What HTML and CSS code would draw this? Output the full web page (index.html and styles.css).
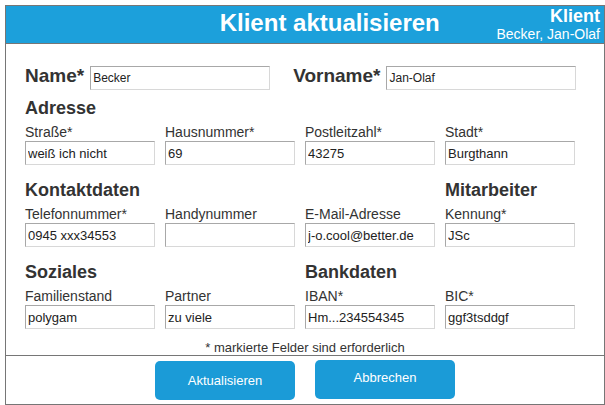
FILE: index.html
```html
<!DOCTYPE html>
<html lang="de">
<head>
<meta charset="utf-8">
<title>Klient aktualisieren</title>
<link rel="stylesheet" href="styles.css">
</head>
<body>
<div class="card">
  <header class="hdr">
    <h1 class="hdr-title">Klient aktualisieren</h1>
    <div class="hdr-client">
      <div class="hdr-client-label">Klient</div>
      <div class="hdr-client-name">Becker, Jan-Olaf</div>
    </div>
  </header>
  <form class="body">
    <div class="name-row">
      <label class="name-field"><span class="big-label">Name*</span><input class="inp inp-sm w-name" value="Becker"></label>
      <label class="name-field"><span class="big-label">Vorname*</span><input class="inp inp-sm w-vorname" value="Jan-Olaf"></label>
    </div>
    <section class="sec sec-first">
      <h2 class="sec-h col-1">Adresse</h2>
      <label class="field"><span class="field-label">Straße*</span><input class="inp inp-grid" value="weiß ich nicht"></label>
      <label class="field"><span class="field-label">Hausnummer*</span><input class="inp inp-grid" value="69"></label>
      <label class="field"><span class="field-label">Postleitzahl*</span><input class="inp inp-grid" value="43275"></label>
      <label class="field"><span class="field-label">Stadt*</span><input class="inp inp-grid" value="Burgthann"></label>
    </section>
    <section class="sec">
      <h2 class="sec-h col-1">Kontaktdaten</h2>
      <h2 class="sec-h col-4">Mitarbeiter</h2>
      <label class="field"><span class="field-label">Telefonnummer*</span><input class="inp inp-grid" value="0945 xxx34553"></label>
      <label class="field"><span class="field-label">Handynummer</span><input class="inp inp-grid" value=""></label>
      <label class="field"><span class="field-label">E-Mail-Adresse</span><input class="inp inp-grid" value="j-o.cool@better.de"></label>
      <label class="field"><span class="field-label">Kennung*</span><input class="inp inp-grid" value="JSc"></label>
    </section>
    <section class="sec">
      <h2 class="sec-h col-1">Soziales</h2>
      <h2 class="sec-h col-3">Bankdaten</h2>
      <label class="field"><span class="field-label">Familienstand</span><input class="inp inp-grid" value="polygam"></label>
      <label class="field"><span class="field-label">Partner</span><input class="inp inp-grid" value="zu viele"></label>
      <label class="field"><span class="field-label">IBAN*</span><input class="inp inp-grid" value="Hm...234554345"></label>
      <label class="field"><span class="field-label">BIC*</span><input class="inp inp-grid" value="ggf3tsddgf"></label>
    </section>
    <p class="note">* markierte Felder sind erforderlich</p>
  </form>
  <footer class="ftr">
    <button class="btn" type="button">Aktualisieren</button>
    <button class="btn btn-alt" type="button">Abbrechen</button>
  </footer>
</div>
</body>
</html>
```
FILE: styles.css
```css
body {
  margin: 5px 0 0 5px;
  font-family: "Liberation Sans", Arial, sans-serif;
  color: #333;
  background: #fff;
}

.card {
  width: 598px;
  height: 398px;
  border: 1px solid #767676;
  display: flex;
  flex-direction: column;
}

.hdr {
  flex: none;
  height: 37px;
  background: #1ca0db;
  border-bottom: 1px solid #767676;
  display: flex;
  color: #fff;
}

.hdr-title {
  flex: 1;
  margin: 0;
  padding-left: 157px;
  text-align: center;
  font-size: 24px;
  font-weight: bold;
  line-height: 33px;
}

.hdr-client {
  text-align: right;
  padding-right: 4px;
}

.hdr-client-label {
  font-size: 18px;
  font-weight: bold;
  line-height: 20px;
}

.hdr-client-name {
  font-size: 14px;
  line-height: 16px;
}

.body {
  flex: 1;
  display: flex;
  flex-direction: column;
  padding: 0 19px;
  margin: 0;
}

.name-row {
  display: flex;
  align-items: baseline;
  gap: 23px;
  margin-top: 22px;
}

.name-field {
  display: flex;
  align-items: baseline;
  gap: 6px;
}

.big-label {
  font-size: 19px;
  font-weight: bold;
  line-height: 20px;
}

.inp {
  box-sizing: border-box;
  height: 24px;
  margin: 0;
  border: 1px solid;
  border-color: #a8a8a8 #d8d8d8 #d8d8d8 #a8a8a8;
  padding: 0 2px;
  font-family: inherit;
  font-size: 13px;
  color: #222;
  background: #fff;
}

.inp-sm {
  font-size: 12px;
}

.w-name {
  width: 180px;
}

.w-vorname {
  width: 190px;
}

.inp-grid {
  width: 130px;
}

.sec {
  display: grid;
  grid-template-columns: repeat(4, 130px);
  column-gap: 10px;
  row-gap: 6px;
  margin-top: 15px;
}

.sec-first {
  margin-top: 8px;
}

.sec-h {
  grid-row: 1;
  margin: 0;
  font-size: 18px;
  font-weight: bold;
  line-height: 20px;
  white-space: nowrap;
}

.col-1 {
  grid-column: 1 / span 2;
}

.col-3 {
  grid-column: 3;
}

.col-4 {
  grid-column: 4;
}

.field {
  grid-row: 2;
  display: flex;
  flex-direction: column;
  gap: 1px;
}

.field-label {
  font-size: 14px;
  line-height: 16px;
}

.note {
  margin: auto 0 0;
  font-size: 13px;
  line-height: 15px;
  text-align: center;
}

.ftr {
  flex: none;
  height: 43px;
  padding-top: 5px;
  border-top: 1px solid #767676;
  display: flex;
  justify-content: center;
  gap: 20px;
}

.btn {
  width: 140px;
  height: 39px;
  padding: 0;
  border: none;
  border-radius: 5px;
  background: #1b9bd7;
  color: #fff;
  font-family: inherit;
  font-size: 13px;
}

.btn-alt {
  margin-top: -1px;
  padding-bottom: 4px;
}
```
